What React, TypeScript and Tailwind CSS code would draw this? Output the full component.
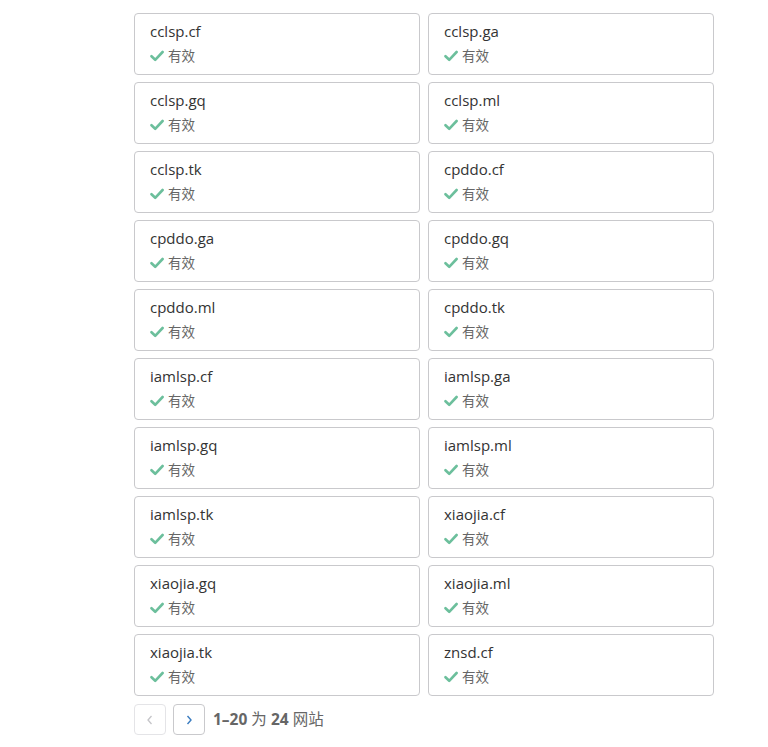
import React from "react";

const domains = [
  "cclsp.cf", "cclsp.ga", "cclsp.gq", "cclsp.ml", "cclsp.tk",
  "cpddo.cf", "cpddo.ga", "cpddo.gq", "cpddo.ml", "cpddo.tk",
  "iamlsp.cf", "iamlsp.ga", "iamlsp.gq", "iamlsp.ml", "iamlsp.tk",
  "xiaojia.cf", "xiaojia.gq", "xiaojia.ml", "xiaojia.tk", "znsd.cf",
];

function Check() {
  return (
    <svg width="14" height="12" viewBox="0 0 14 12" className="shrink-0">
      <path d="M1.5 6.2 L5.2 9.8 L12.6 2" fill="none" stroke="#6cbf9c" strokeWidth="2.6" strokeLinecap="round" strokeLinejoin="round" />
    </svg>
  );
}

export default function App() {
  return (
    <div className="w-[768px] h-[747px] bg-white overflow-hidden" style={{ fontFamily: '"Open Sans", "Noto Sans", "Noto Sans CJK SC", sans-serif' }}>
      <div className="ml-[134px] w-[580px] pt-[13px]">
        <div className="grid grid-cols-2 gap-x-[8px] gap-y-[7px]">
          {domains.map((d) => (
            <div key={d} className="h-[62px] border border-[#c9c9cc] rounded-[4px] pl-[15px] pt-[7px]">
              <div className="text-[15px] leading-[20px] text-[#333]">{d}</div>
              <div className="flex items-center gap-[4px] mt-[6px]">
                <Check />
                <span className="text-[13.5px] leading-[18px] text-[#666]">有效</span>
              </div>
            </div>
          ))}
        </div>
        <div className="flex items-center mt-[8px] gap-[7px]">
          <div className="w-[32px] h-[31px] border border-[#e4e4e7] rounded-[4px] flex items-center justify-center">
            <svg width="10" height="12" viewBox="0 0 10 12"><path d="M6.5 2 L3 6 L6.5 10" fill="none" stroke="#c4c4c8" strokeWidth="1.3" /></svg>
          </div>
          <div className="w-[32px] h-[31px] border border-[#c9c9cc] rounded-[4px] flex items-center justify-center">
            <svg width="10" height="12" viewBox="0 0 10 12"><path d="M3.5 2 L7 6 L3.5 10" fill="none" stroke="#3a7cc0" strokeWidth="1.4" /></svg>
          </div>
          <div className="text-[15.5px] text-[#666] ml-[1px]">
            <span className="font-bold">1–20</span> 为 <span className="font-bold">24</span> 网站
          </div>
        </div>
      </div>
    </div>
  );
}
